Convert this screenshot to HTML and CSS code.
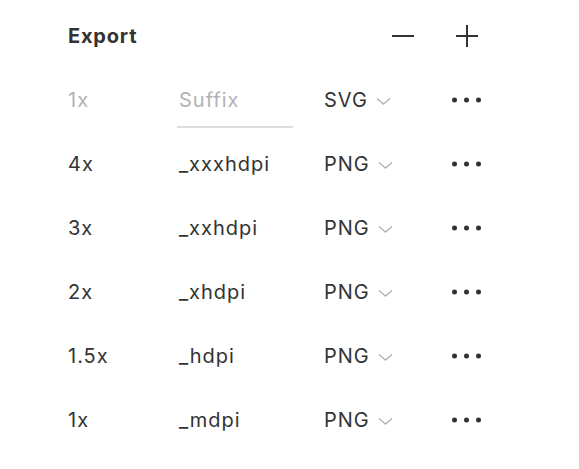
FILE: index.html
```html
<!DOCTYPE html>
<html lang="en">
<head>
<meta charset="utf-8">
<title>Export</title>
<link rel="stylesheet" href="styles.css">
</head>
<body>
<div class="panel">
  <div class="header">
    <div class="title">Export</div>
    <div class="actions">
      <svg class="icon" width="22" height="22" viewBox="0 0 22 22"><path d="M0 11h22" stroke="#333" stroke-width="2"/></svg>
      <svg class="icon" width="22" height="22" viewBox="0 0 22 22"><path d="M0 11h22M11 0v22" stroke="#333" stroke-width="2"/></svg>
    </div>
  </div>
  <div class="rows">
    <div class="row">
      <div class="scale muted">1x</div>
      <div class="suffix"><div class="field">Suffix</div></div>
      <div class="format">SVG<svg class="chev" width="15" height="8" viewBox="0 0 15 8"><path d="M1 1.5l6.5 5.5L14 1.5" fill="none" stroke="#b3b3b3" stroke-width="1.4"/></svg></div>
      <div class="more"><svg width="30" height="6" viewBox="0 0 30 6"><circle cx="2.5" cy="3" r="2.5"/><circle cx="14.5" cy="3" r="2.5"/><circle cx="26.5" cy="3" r="2.5"/></svg></div>
    </div>
    <div class="row">
      <div class="scale">4x</div>
      <div class="suffix">_xxxhdpi</div>
      <div class="format">PNG<svg class="chev" width="15" height="8" viewBox="0 0 15 8"><path d="M1 1.5l6.5 5.5L14 1.5" fill="none" stroke="#b3b3b3" stroke-width="1.4"/></svg></div>
      <div class="more"><svg width="30" height="6" viewBox="0 0 30 6"><circle cx="2.5" cy="3" r="2.5"/><circle cx="14.5" cy="3" r="2.5"/><circle cx="26.5" cy="3" r="2.5"/></svg></div>
    </div>
    <div class="row">
      <div class="scale">3x</div>
      <div class="suffix">_xxhdpi</div>
      <div class="format">PNG<svg class="chev" width="15" height="8" viewBox="0 0 15 8"><path d="M1 1.5l6.5 5.5L14 1.5" fill="none" stroke="#b3b3b3" stroke-width="1.4"/></svg></div>
      <div class="more"><svg width="30" height="6" viewBox="0 0 30 6"><circle cx="2.5" cy="3" r="2.5"/><circle cx="14.5" cy="3" r="2.5"/><circle cx="26.5" cy="3" r="2.5"/></svg></div>
    </div>
    <div class="row">
      <div class="scale">2x</div>
      <div class="suffix">_xhdpi</div>
      <div class="format">PNG<svg class="chev" width="15" height="8" viewBox="0 0 15 8"><path d="M1 1.5l6.5 5.5L14 1.5" fill="none" stroke="#b3b3b3" stroke-width="1.4"/></svg></div>
      <div class="more"><svg width="30" height="6" viewBox="0 0 30 6"><circle cx="2.5" cy="3" r="2.5"/><circle cx="14.5" cy="3" r="2.5"/><circle cx="26.5" cy="3" r="2.5"/></svg></div>
    </div>
    <div class="row">
      <div class="scale">1.5x</div>
      <div class="suffix">_hdpi</div>
      <div class="format">PNG<svg class="chev" width="15" height="8" viewBox="0 0 15 8"><path d="M1 1.5l6.5 5.5L14 1.5" fill="none" stroke="#b3b3b3" stroke-width="1.4"/></svg></div>
      <div class="more"><svg width="30" height="6" viewBox="0 0 30 6"><circle cx="2.5" cy="3" r="2.5"/><circle cx="14.5" cy="3" r="2.5"/><circle cx="26.5" cy="3" r="2.5"/></svg></div>
    </div>
    <div class="row">
      <div class="scale">1x</div>
      <div class="suffix">_mdpi</div>
      <div class="format">PNG<svg class="chev" width="15" height="8" viewBox="0 0 15 8"><path d="M1 1.5l6.5 5.5L14 1.5" fill="none" stroke="#b3b3b3" stroke-width="1.4"/></svg></div>
      <div class="more"><svg width="30" height="6" viewBox="0 0 30 6"><circle cx="2.5" cy="3" r="2.5"/><circle cx="14.5" cy="3" r="2.5"/><circle cx="26.5" cy="3" r="2.5"/></svg></div>
    </div>
  </div>
</div>
</body>
</html>
```

FILE: styles.css
```css
html, body {
  margin: 0;
  padding: 0;
  background: #ffffff;
}
body {
  font-family: Inter, "Noto Sans", sans-serif;
  color: #333333;
}
.panel {
  padding: 24px 0 0 68px;
  width: 414px;
}
.header {
  display: flex;
  align-items: center;
  justify-content: space-between;
  height: 24px;
  width: 410px;
}
.title {
  font-size: 20px;
  font-weight: 700;
  line-height: 24px;
  letter-spacing: 0.8px;
}
.actions {
  display: flex;
  align-items: center;
  gap: 42px;
}
.icon {
  display: block;
}
.rows {
  margin-top: 20px;
}
.row {
  display: grid;
  grid-template-columns: 111px 145px 128px 30px;
  align-items: center;
  height: 64px;
  font-size: 20px;
  line-height: 24px;
  letter-spacing: 1px;
}
.muted {
  color: #b3b3b3;
}
.field {
  width: 114px;
  margin-left: -2px;
  padding: 16px 0 14px 2px;
  border-bottom: 2px solid #dedede;
  color: #b3b3b3;
}
.format {
  display: flex;
  align-items: center;
  gap: 8px;
}
.chev {
  display: block;
  margin-top: 2px;
}
.more svg {
  display: block;
  fill: #333333;
}
```
